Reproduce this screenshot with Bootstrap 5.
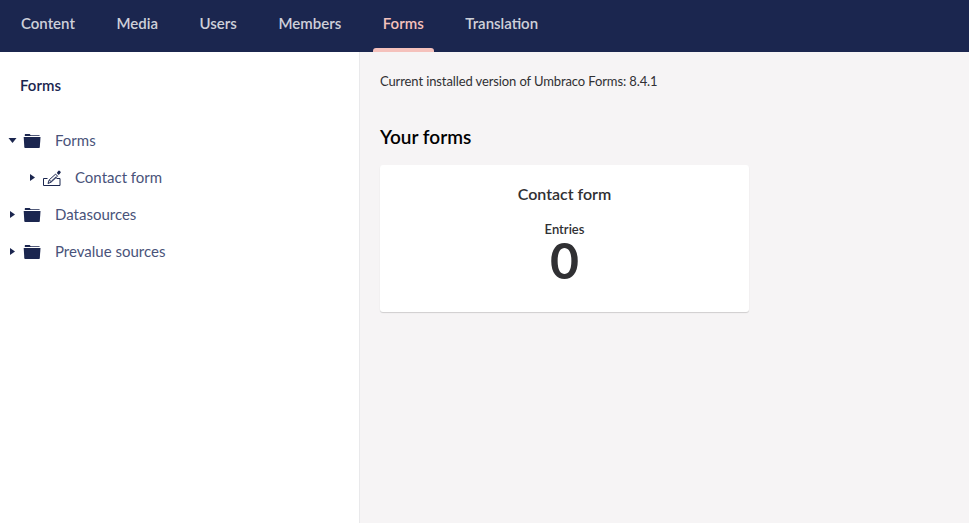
<!DOCTYPE html>
<html lang="en">
<head>
<meta charset="utf-8">
<meta name="viewport" content="width=device-width, initial-scale=1">
<title>Forms</title>
<link href="https://cdn.jsdelivr.net/npm/bootstrap@5.3.0/dist/css/bootstrap.min.css" rel="stylesheet">
<style>
body{font-family:Lato,sans-serif;font-size:15px;line-height:20px;background:#f6f4f5;color:#303033;height:523px;overflow:hidden}
.topbar{height:52px;background:#1b264f}
.topbar .nav{padding-left:11px;gap:21.6px}
.topbar .nav-link{height:52px;padding:0 10px;line-height:47px;color:rgba(255,255,255,.8);font-weight:600;font-size:15px}
.topbar .nav-link.active{color:#f5c1bc}
.topbar .nav-link.active::after{content:"";display:block;height:4px;margin:1px -10px 0;border-radius:3px 3px 0 0;background:#f5c1bc}
.tree{width:360px;border-right:1px solid #e9e9eb;color:#1b264f}
.tree h1{font-size:15px;font-weight:600;line-height:20px;margin:23px 0 27px 20px}
.tree-row{height:37px;color:#49537a;text-decoration:none;padding-left:8px}
.tree-row.child{padding-left:28px}
.tree-row span{padding-bottom:2px}
.caret{width:9px;height:9px;margin-right:6px;fill:#1b264f}
.glyph{width:18px;height:18px;margin-right:14px;fill:#1b264f}
.main{padding:19px 20px}
.version{font-size:13px;margin:0 0 36px;letter-spacing:-.11px}
.main h2{font-size:19px;font-weight:600;line-height:20px;color:#000;margin:0 0 18px}
.form-card{width:369px;height:147px;border-radius:3px;box-shadow:0 1px 1px rgba(0,0,0,.16);padding-top:19px}
.form-card h3{font-size:16px;line-height:20px;font-weight:600;margin:0 0 15px}
.entries-label{font-size:13px;font-weight:600;line-height:20px}
.entries-count{font-size:50px;font-weight:700;line-height:42px}
</style>
</head>
<body class="d-flex flex-column">
<svg class="d-none" aria-hidden="true">
<symbol id="right" viewBox="0 0 9 9"><path d="M2 1v7l5-3.5z"/></symbol>
<symbol id="down" viewBox="0 0 9 9"><path d="M.5 2h8l-4 5z"/></symbol>
<symbol id="folder" viewBox="0 0 18 18"><path d="M2.2 2h4.5l1 1.2H16q.8 0 .8.8H1.8V2.6z"/><path d="M.7 5h16.8L16.8 15.2q-.1.8-.8.8H2.1q-.7 0-.8-.8z"/></symbol>
<symbol id="form" viewBox="0 0 18 18"><path fill="none" stroke="#1b264f" stroke-width="1" d="M4.5 9.5h-4v7h16.5v-7h-3.5M5 14.5l1.2-3.6 6.4-5.8 2 2.1-6.4 5.9zM6.5 11l1.9 2M8.3 12.2l4.9-4.5"/><path d="M13.8 3.9l1.4-1.9q.8-.8 1.6 0l.6.6q.7.8 0 1.5L15.8 5.9z"/></symbol>
</svg>
<header class="topbar flex-shrink-0"><nav class="nav flex-nowrap">
<a class="nav-link" href="#">Content</a><a class="nav-link" href="#">Media</a><a class="nav-link" href="#">Users</a><a class="nav-link" href="#">Members</a><a class="nav-link active" href="#">Forms</a><a class="nav-link" href="#">Translation</a>
</nav></header>
<div class="d-flex flex-grow-1">
<aside class="tree bg-white flex-shrink-0">
<h1>Forms</h1>
<nav class="d-flex flex-column" aria-label="Forms tree">
<a class="tree-row d-flex align-items-center" href="#"><svg class="caret"><use href="#down"/></svg><svg class="glyph"><use href="#folder"/></svg><span>Forms</span></a>
<a class="tree-row child d-flex align-items-center" href="#"><svg class="caret"><use href="#right"/></svg><svg class="glyph"><use href="#form"/></svg><span>Contact form</span></a>
<a class="tree-row d-flex align-items-center" href="#"><svg class="caret"><use href="#right"/></svg><svg class="glyph"><use href="#folder"/></svg><span>Datasources</span></a>
<a class="tree-row d-flex align-items-center" href="#"><svg class="caret"><use href="#right"/></svg><svg class="glyph"><use href="#folder"/></svg><span>Prevalue sources</span></a>
</nav>
</aside>
<main class="main">
<p class="version">Current installed version of Umbraco Forms: 8.4.1</p>
<h2>Your forms</h2>
<section class="form-card bg-white text-center">
<h3>Contact form</h3>
<div class="entries-label">Entries</div>
<div class="entries-count">0</div>
</section>
</main>
</div>
<script src="https://cdn.jsdelivr.net/npm/bootstrap@5.3.0/dist/js/bootstrap.bundle.min.js"></script>
</body>
</html>
